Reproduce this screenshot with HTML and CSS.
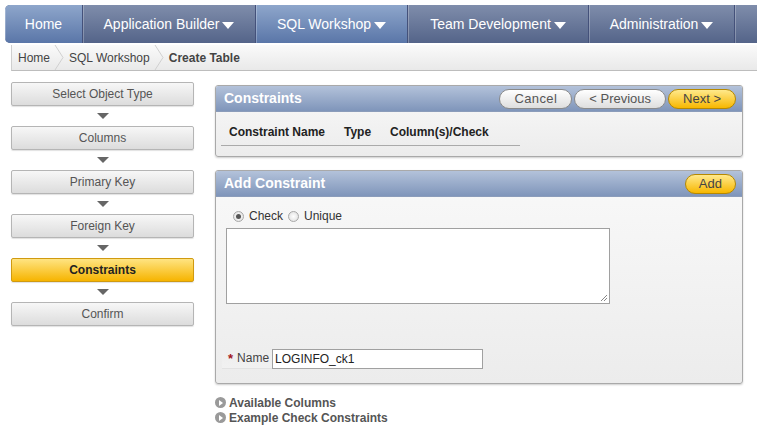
FILE: index.html
```html
<!DOCTYPE html>
<html>
<head>
<meta charset="utf-8">
<link rel="stylesheet" href="styles.css">
</head>
<body>
<nav class="topnav">
  <a class="tab light w-home">Home</a>
  <a class="tab dark w-ab">Application Builder<span class="caret"></span></a>
  <a class="tab light w-sql">SQL Workshop<span class="caret"></span></a>
  <a class="tab dark w-team">Team Development<span class="caret"></span></a>
  <a class="tab dark w-admin">Administration<span class="caret"></span></a>
  <span class="tab dark w-rest"></span>
</nav>
<div class="crumbs">
  <span class="crumb">Home</span>
  <svg class="chev" width="10" height="25" viewBox="0 0 10 25"><path d="M1 0 L9 12.5 L1 25" fill="none" stroke="#d0d0d0" stroke-width="1"/></svg>
  <span class="crumb">SQL Workshop</span>
  <svg class="chev" width="10" height="25" viewBox="0 0 10 25"><path d="M1 0 L9 12.5 L1 25" fill="none" stroke="#d0d0d0" stroke-width="1"/></svg>
  <span class="crumb current">Create Table</span>
</div>
<div class="main">
  <div class="wizard">
    <div class="step">Select Object Type</div>
    <div class="arrow"></div>
    <div class="step">Columns</div>
    <div class="arrow"></div>
    <div class="step">Primary Key</div>
    <div class="arrow"></div>
    <div class="step">Foreign Key</div>
    <div class="arrow"></div>
    <div class="step active">Constraints</div>
    <div class="arrow"></div>
    <div class="step">Confirm</div>
  </div>
  <div class="content">
    <section class="region r1">
      <header class="rhead">
        <h2>Constraints</h2>
        <div class="btns">
          <button class="pill gray">Cancel</button>
          <button class="pill gray">&lt; Previous</button>
          <button class="pill gold">Next &gt;</button>
        </div>
      </header>
      <div class="rbody r1body">
        <table class="ctable">
          <thead><tr><th class="c1">Constraint Name</th><th class="c2">Type</th><th class="c3">Column(s)/Check</th></tr></thead>
        </table>
      </div>
    </section>
    <section class="region r2">
      <header class="rhead">
        <h2>Add Constraint</h2>
        <div class="btns">
          <button class="pill gold add">Add</button>
        </div>
      </header>
      <div class="rbody r2body">
        <div class="radios">
          <span class="radio on"></span><span class="rlabel">Check</span>
          <span class="radio"></span><span class="rlabel">Unique</span>
        </div>
        <div class="ta"><svg class="grip" width="8" height="8" viewBox="0 0 8 8"><path d="M7 1 L1 7 M7 4 L4 7" stroke="#888" stroke-width="1"/></svg></div>
        <div class="namerow">
          <label class="nlabel"><span class="req">*</span>Name</label>
          <div class="input">LOGINFO_ck1</div>
        </div>
      </div>
    </section>
    <div class="links">
      <div class="link"><span class="licon"></span>Available Columns</div>
      <div class="link"><span class="licon"></span>Example Check Constraints</div>
    </div>
  </div>
</div>
</body>
</html>
```
FILE: styles.css
```css
* { box-sizing: border-box; }
body {
  margin: 0;
  font-family: "Liberation Sans", Arial, sans-serif;
  background: #fff;
  width: 757px;
  height: 436px;
  overflow: hidden;
}
.topnav {
  display: flex;
  margin: 5px 0 0 5px;
  height: 38px;
  border-radius: 5px 0 0 5px;
  overflow: hidden;
  background: #56658a;
}
.tab {
  display: flex;
  align-items: center;
  justify-content: center;
  color: #fff;
  font-size: 14px;
  height: 38px;
  border-right: 1px solid #44517a;
  box-shadow: inset 1px 0 0 rgba(255,255,255,0.25);
}
.tab.light { background: linear-gradient(#8ea6cb, #5a76a8); }
.tab.dark { background: linear-gradient(#7f8dab, #546489); }
.w-home { width: 78px; }
.w-ab { width: 173px; }
.w-sql { width: 152px; }
.w-team { width: 181px; }
.w-admin { width: 146px; }
.w-rest { flex: 1; border-right: none; }
.caret {
  display: inline-block;
  width: 0; height: 0;
  border-left: 6px solid transparent;
  border-right: 6px solid transparent;
  border-top: 7px solid #fff;
  margin-left: 3px;
  margin-top: 2px;
}
.crumbs {
  display: flex;
  align-items: center;
  margin: 2px 0 0 11px;
  height: 26px;
  background: linear-gradient(#fafafa, #e9e9e9);
  border-left: 1px solid #cfcfcf;
  border-bottom: 1px solid #bdbdbd;
  padding-left: 5px;
  font-size: 12px;
  color: #444;
}
.crumb { padding: 0 3px 0 1px; }
.chev { margin: 0 4px 0 1px; }
.crumb.current { font-weight: bold; color: #444; }
.main {
  display: flex;
  padding-left: 11px;
}
.wizard {
  width: 183px;
  padding-top: 11px;
  display: flex;
  flex-direction: column;
}
.step {
  height: 24px;
  border: 1px solid #b5b5b5;
  border-radius: 2px;
  background: linear-gradient(#f7f7f7, #dcdcdc);
  box-shadow: 0 1px 1px rgba(0,0,0,0.12);
  font-size: 12px;
  color: #555;
  display: flex;
  align-items: center;
  justify-content: center;
}
.step.active {
  background: linear-gradient(#ffe482, #f6b400);
  border-color: #d09a10;
  color: #222;
  font-weight: bold;
}
.arrow {
  height: 20px;
  display: flex;
  align-items: center;
  justify-content: center;
}
.arrow::before {
  content: "";
  width: 0; height: 0;
  border-left: 6px solid transparent;
  border-right: 6px solid transparent;
  border-top: 6px solid #666;
}
.content {
  margin-left: 21px;
  width: 528px;
  padding-top: 14px;
}
.region {
  border: 1px solid #a9a9a9;
  border-radius: 3px;
  background: linear-gradient(#f9f9f9, #ececec);
  box-shadow: 0 1px 2px rgba(0,0,0,0.2);
  overflow: hidden;
}
.rhead {
  height: 26px;
  display: flex;
  align-items: center;
  justify-content: space-between;
  padding: 0 6px 0 8px;
  background: linear-gradient(#b3c2da, #7f95ba);
  border-bottom: 1px solid #8b9cba;
}
.rhead h2 {
  margin: 0 0 2px 0;
  font-size: 14px;
  font-weight: bold;
  color: #fff;
}
.btns { display: flex; gap: 2px; }
.pill {
  font-family: "Liberation Sans", Arial, sans-serif;
  font-size: 13px;
  height: 20px;
  padding: 0 14px;
  border-radius: 10px;
  color: #555;
  cursor: pointer;
}
.pill.gray {
  background: linear-gradient(#ffffff, #dedede);
  border: 1px solid #8a8a8a;
}
.pill.gray:first-child { letter-spacing: 0.4px; }
.pill.gold {
  background: linear-gradient(#ffe98c, #f7b700);
  border: 1px solid #b68800;
  color: #444;
}
.pill.add { padding: 0 13px; }
.r1body { height: 44px; padding: 13px 0 0 5px; }
.ctable { border-collapse: collapse; width: 299px; }
.ctable th {
  font-size: 12px;
  font-weight: bold;
  color: #222;
  text-align: left;
  padding: 0 0 6px 0;
  border-bottom: 1px solid #aaa;
}
.ctable .c1 { padding-left: 8px; width: 123px; }
.ctable .c2 { width: 46px; }
.r2 { margin-top: 13px; }
.r2body { height: 186px; padding: 12px 0 0 10px; }
.radios { display: flex; align-items: center; height: 14px; padding-left: 7px; font-size: 12px; color: #333; }
.radio {
  width: 11px; height: 11px; border-radius: 50%;
  border: 1px solid #a8a8a8;
  background: radial-gradient(circle, #fff, #dcdcdc);
  margin-right: 5px;
  display: inline-flex; align-items: center; justify-content: center;
}
.radio.on::after { content: ""; width: 5px; height: 5px; border-radius: 50%; background: #555; }
.rlabel { margin-right: 5px; }
.ta {
  margin-top: 5px;
  width: 384px;
  height: 76px;
  border: 1px solid #a0a0a0;
  background: #fff;
  position: relative;
}
.grip { position: absolute; right: 1px; bottom: 1px; }
.namerow {
  display: flex;
  align-items: center;
  margin-top: 44px;
  margin-left: -4px;
}
.nlabel {
  display: flex;
  align-items: center;
  height: 21px;
  padding: 0 3px 0 6px;
  font-size: 12px;
  color: #444;
  border-bottom: 1px solid #e2e2e2;
  background: linear-gradient(rgba(255,255,255,0), #f1f1f1);
}
.req { color: #a1161b; font-weight: bold; margin-right: 4px; font-size: 13px; }
.input {
  width: 211px;
  height: 20px;
  border: 1px solid #a0a0a0;
  background: #fff;
  font-size: 12px;
  color: #222;
  padding: 2px 0 0 2px;
}
.links { margin-top: 11px; }
.link {
  display: flex;
  align-items: center;
  font-size: 12px;
  font-weight: bold;
  color: #555;
  height: 15px;
}
.licon {
  width: 11px; height: 11px; border-radius: 50%;
  background: #9a9a9a;
  margin-right: 3px;
  position: relative;
}
.licon::after {
  content: "";
  position: absolute;
  left: 4px; top: 2.5px;
  width: 0; height: 0;
  border-top: 3px solid transparent;
  border-bottom: 3px solid transparent;
  border-left: 4px solid #fff;
}
```
